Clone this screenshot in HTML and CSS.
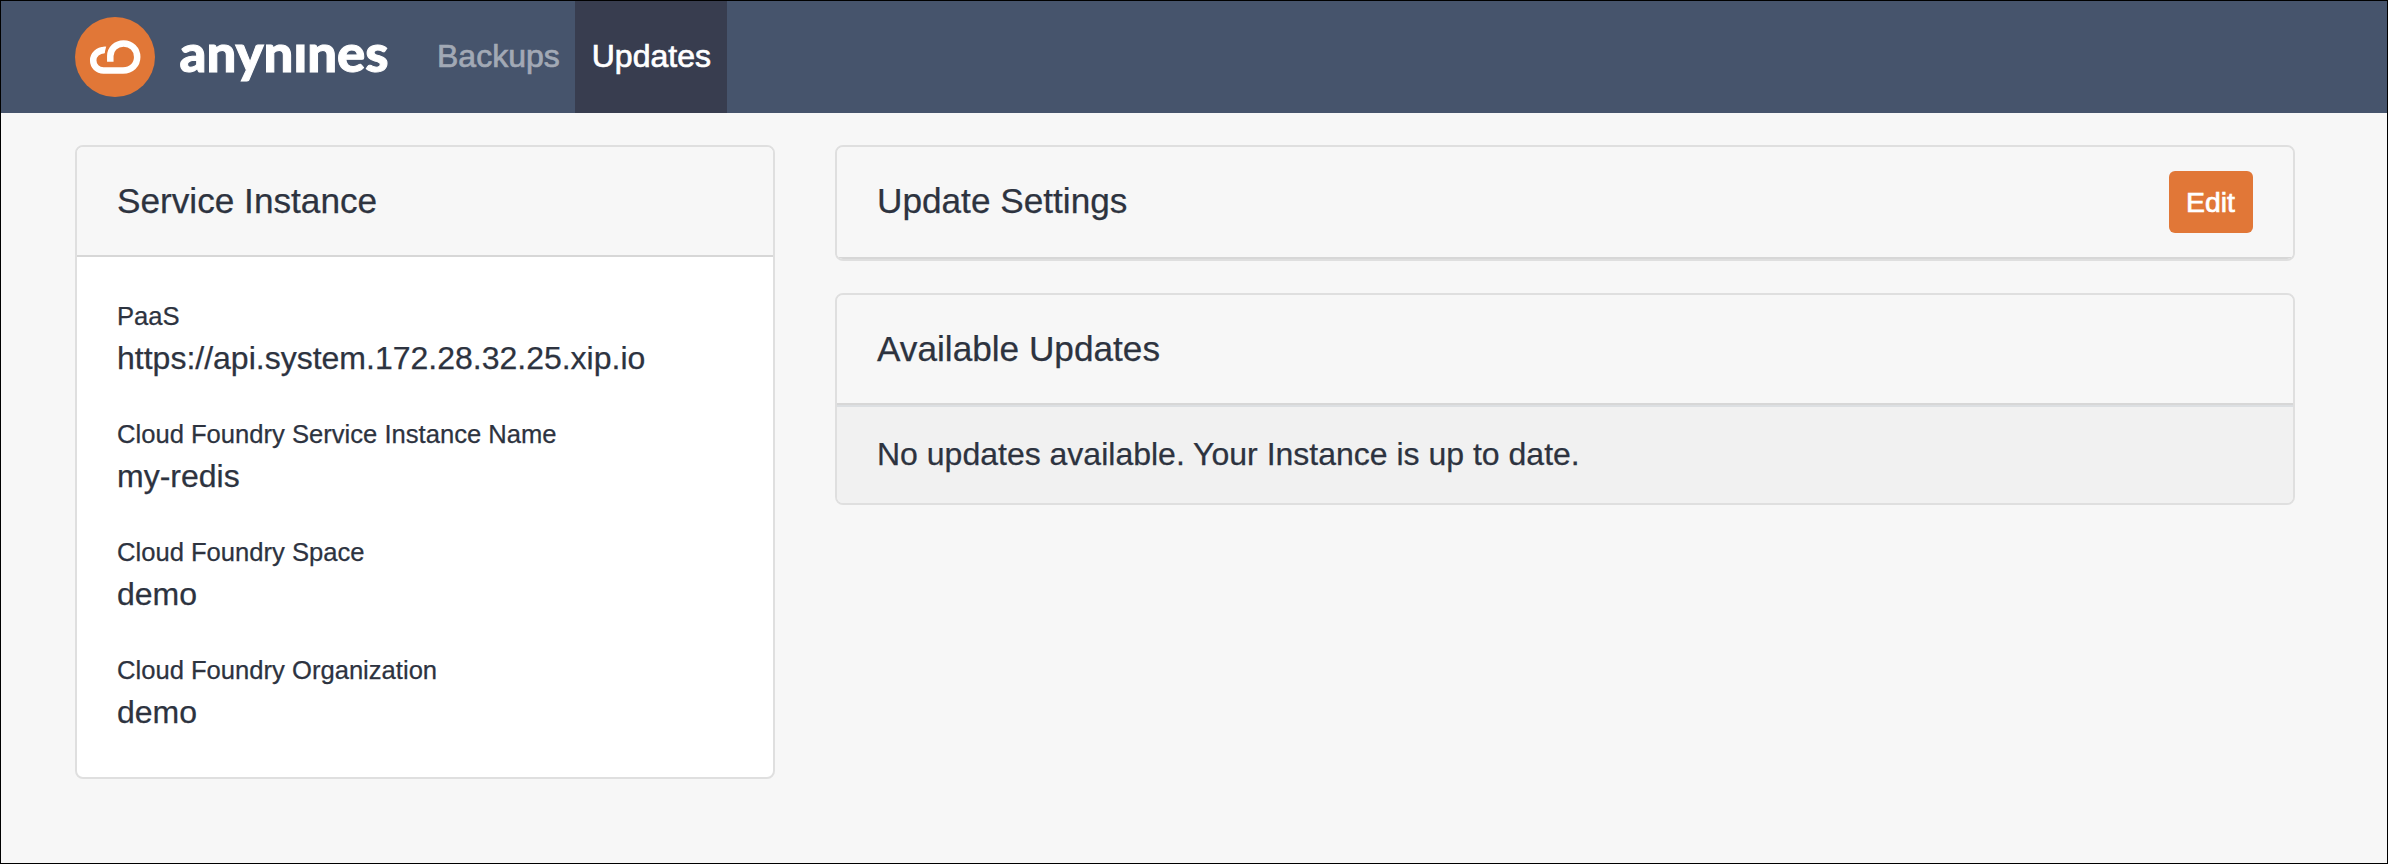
FILE: index.html
```html
<!DOCTYPE html>
<html lang="en">
<head>
<meta charset="utf-8">
<title>anynines – Updates</title>
<link rel="stylesheet" href="styles.css">
</head>
<body>
<div class="page">
  <header class="navbar">
    <a class="brand">
      <svg class="brand-logo" width="316" height="80" viewBox="0 0 316 80">
        <circle cx="40" cy="40" r="40" fill="#e17737"/>
        <path d="M29.6 32.9 C23 33.1 18.2 37.7 18.2 43.3 C18.2 49.3 22.7 53.4 28.5 53.4 H48 C56.5 53.4 62.2 47.8 62.2 40 C62.2 32.2 56.2 26.4 48.6 26.4 C41 26.4 35.3 32 35.3 39 V44.7" fill="none" stroke="#fff" stroke-width="6.5"/>
        <path d="M28.5 29.7 L31.2 29.5 L29.6 36.1 L28.5 36.2 Z" fill="#fff"/>
        <text class="brand-name" x="104.5" y="55" textLength="209" lengthAdjust="spacingAndGlyphs">anynınes</text>
      </svg>
    </a>
    <nav class="nav">
      <a class="nav-link">Backups</a>
      <a class="nav-link nav-link-active">Updates</a>
    </nav>
  </header>
  <main class="content">
    <section class="card card-instance">
      <h2 class="card-header">Service Instance</h2>
      <dl class="details">
        <div class="detail"><dt>PaaS</dt><dd>https://api.system.172.28.32.25.xip.io</dd></div>
        <div class="detail"><dt>Cloud Foundry Service Instance Name</dt><dd>my-redis</dd></div>
        <div class="detail"><dt>Cloud Foundry Space</dt><dd>demo</dd></div>
        <div class="detail"><dt>Cloud Foundry Organization</dt><dd>demo</dd></div>
      </dl>
    </section>
    <div class="column">
      <section class="card">
        <div class="card-header card-header-actions"><h2 class="card-title">Update Settings</h2><button class="btn">Edit</button></div>
      </section>
      <section class="card">
        <h2 class="card-header">Available Updates</h2>
        <p class="notice">No updates available. Your Instance is up to date.</p>
      </section>
    </div>
  </main>
</div>
</body>
</html>
```
FILE: styles.css
```css
* { box-sizing: border-box; }
body {
  margin: 0;
  font-family: "Liberation Sans", Arial, sans-serif;
  font-size: 32px;
  color: #2d333f;
  -webkit-text-stroke: 0.25px currentColor;
}
h2, dl, dd, p { margin: 0; }
.page {
  height: 864px;
  border: 1px solid #000;
  background: #f7f7f7;
}
.navbar {
  display: flex;
  height: 112px;
  padding-left: 74px;
  background: #46546c;
}
.brand { padding-top: 16px; width: 346px; }
.brand-logo { display: block; }
.brand-name {
  font-family: Lato, sans-serif;
  font-weight: 900;
  font-size: 52px;
  fill: #fff;
  -webkit-text-stroke: 0;
  stroke: #fff;
  stroke-width: 1px;
}
.nav { display: flex; }
.nav-link {
  padding: 0 16px;
  line-height: 111px;
  color: #a2a9b5;
  -webkit-text-stroke-width: 0.7px;
}
.nav-link-active { width: 152px; margin-left: -1px; padding-left: 17px; padding-right: 0; background: #383d4f; color: #fff; }
.content {
  display: grid;
  grid-template-columns: 700px 1460px;
  column-gap: 60px;
  align-items: start;
  padding: 32px 0 0 74px;
}
.column { display: grid; row-gap: 32px; }
.card {
  border: 2px solid #dfdfdf;
  border-radius: 8px;
  overflow: hidden;
}
.card-instance { height: 634px; background: #fff; }
.card-header {
  height: 110px;
  padding: 0 40px;
  border-bottom: 2px solid #d7d7d7;
  background: #f7f7f7;
  font-size: 35.2px;
  font-weight: 400;
  line-height: 107px;
}
.card-header-actions {
  display: flex;
  justify-content: space-between;
  height: 112px;
}
.card-title { font: inherit; }
.btn {
  width: 84px;
  height: 62px;
  margin-top: 24px;
  padding: 0 1px 0 0;
  border: 0;
  border-radius: 6px;
  background: #e17737;
  color: #fff;
  font: 28.4px/60px "Liberation Sans", Arial, sans-serif;
  -webkit-text-stroke: 0.7px #fff;
}
.details {
  display: grid;
  row-gap: 30px;
  padding: 37px 40px;
}
.detail { height: 88px; }
.detail dt { font-size: 25.6px; line-height: 44px; }
.detail dd { line-height: 40px; }
.notice {
  height: 98px;
  padding: 0 40px;
  border-top: 2px solid #dcdfe2;
  background: #f1f1f1;
  line-height: 94px;
}
```
